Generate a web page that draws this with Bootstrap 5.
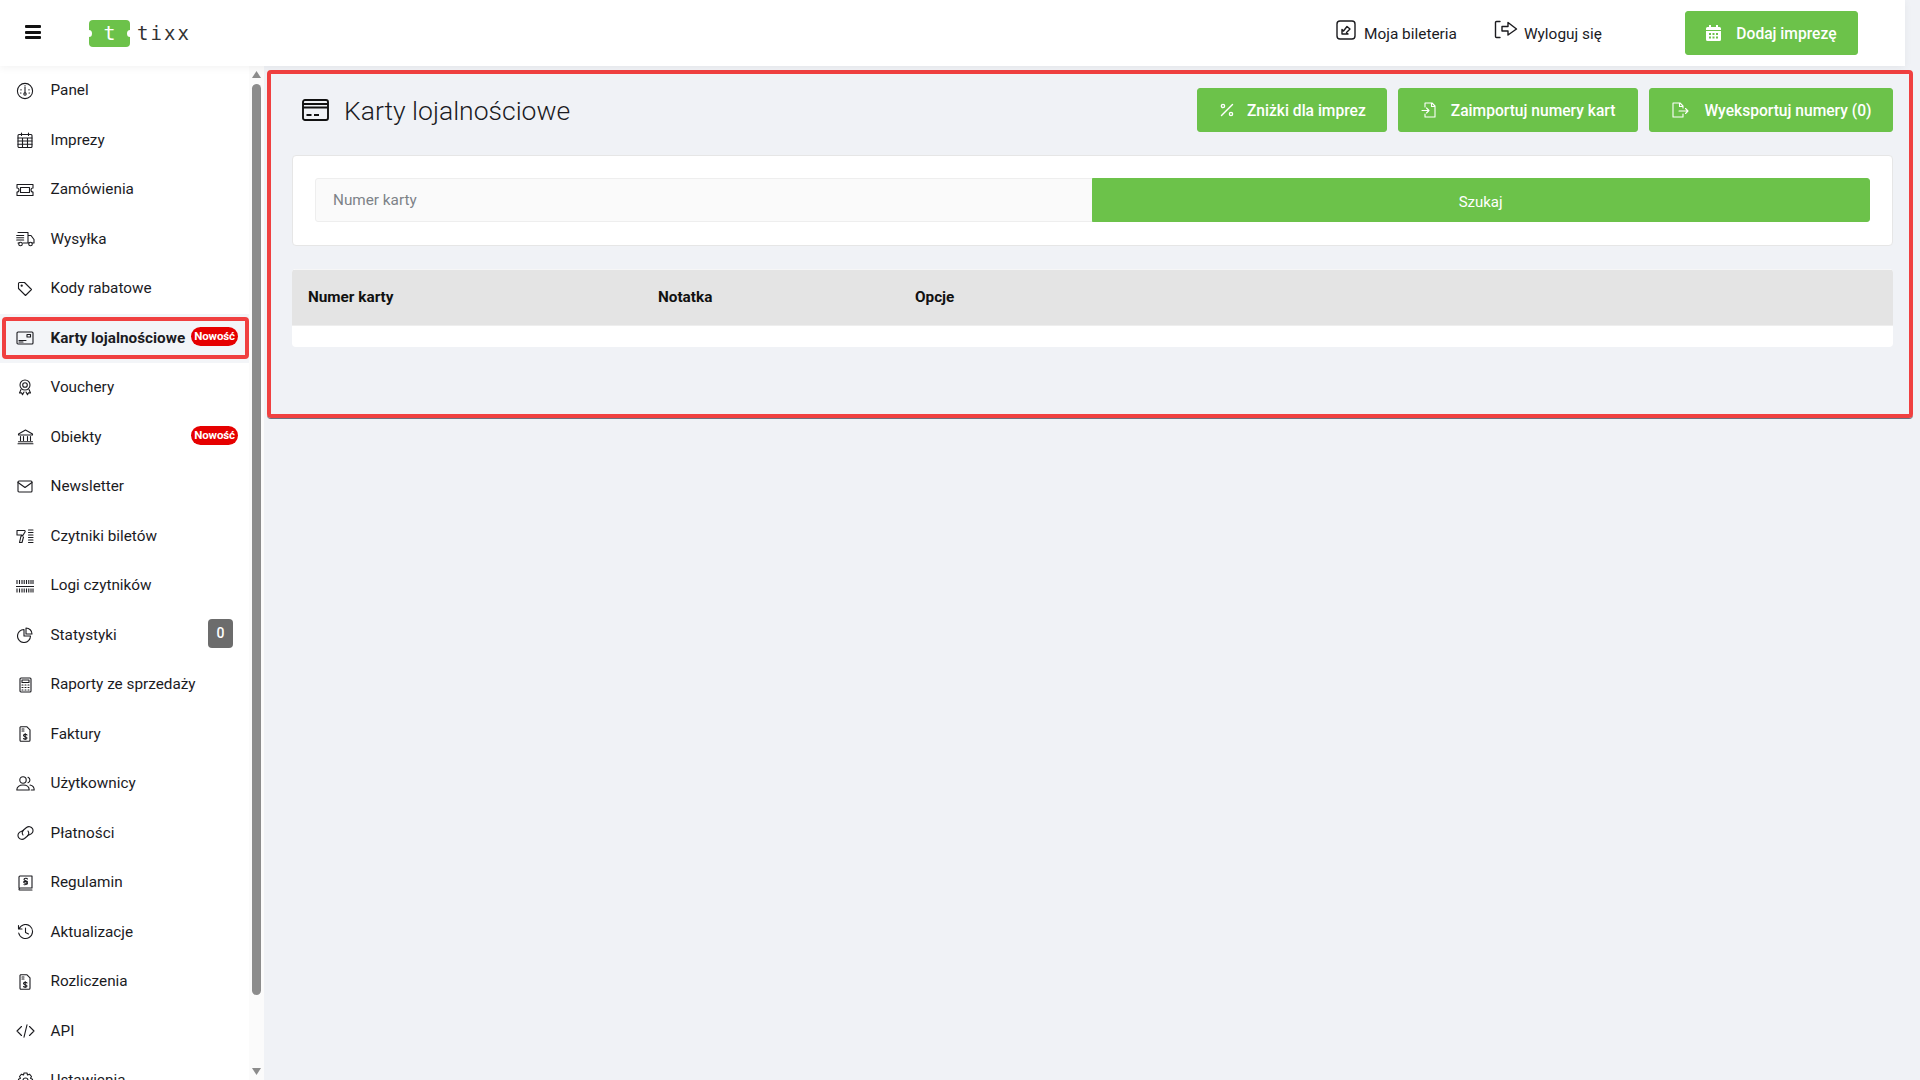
<!DOCTYPE html>
<html lang="pl">
<head>
<meta charset="utf-8">
<title>Karty lojalnościowe</title>
<link href="https://cdn.jsdelivr.net/npm/bootstrap@5.3.0/dist/css/bootstrap.min.css" rel="stylesheet">
<style>
html,body{height:100%;overflow:hidden}
body{font-family:Roboto,"Liberation Sans",sans-serif;background:#f0f2f6;color:#1b1b1f;font-size:14px}
svg{flex:none;display:block}
.ic{fill:none;stroke:currentColor;stroke-width:1.1;stroke-linecap:round;stroke-linejoin:round}
.ic-strong{stroke-width:1.4}
.top-bar{height:66px;margin-right:15px;background:#fff;padding:0;box-shadow:0 2px 8px rgba(0,0,0,.05);position:relative;z-index:2;flex:none}
.burger{margin-left:25px;margin-bottom:2px;width:16px;display:flex;flex-direction:column;gap:2.500px}
.burger span{display:block;height:3px;background:#111;border-radius:1px}
.logo-box{margin-left:48px;width:41px;height:27px;background:#6cc24a;border-radius:4px;color:#fff;font:400 20px/27px "DejaVu Sans Mono","Liberation Mono",monospace;text-align:center;position:relative}
.logo-box::before,.logo-box::after{content:"";position:absolute;top:10px;width:6px;height:7px;background:#fff;border-radius:50%}
.logo-box::before{left:-3px}.logo-box::after{right:-3px}
.logo-txt{margin-left:7px;font:400 19px/27px "DejaVu Sans Mono","Liberation Mono",monospace;color:#333;letter-spacing:2.100px}
.top-link{color:#1b1b1f;font-size:15.4px;text-decoration:none;display:flex;align-items:center;gap:8px;padding-top:4px}
.top-link svg{margin-top:-10px}
.link-one{margin-left:auto}
.link-two{margin-left:37px}
.link-two svg{margin-right:-2px}
.btn-tx{--bs-btn-bg:#6cc24a;--bs-btn-border-color:#6cc24a;--bs-btn-color:#fff;--bs-btn-hover-bg:#5fb33f;--bs-btn-hover-border-color:#5fb33f;--bs-btn-hover-color:#fff;height:44px;font-size:15.6px;font-weight:500;border-radius:3px;padding:4px 22px 0;display:inline-flex;align-items:center;justify-content:center;gap:15px;white-space:nowrap}
.btn-tx svg{margin-top:-4px}
.btn-tight{gap:13px}
.btn-end{padding-right:20px}
.add-btn{margin-left:83px;margin-right:47px;padding-left:20.500px;padding-right:20.500px}
.side{width:264px;flex:none;background:#fff;overflow:hidden}
.side-list{width:249px;flex:none}
.side-item{height:49.5px;display:flex;align-items:center;padding:0 10px 0 16px;color:#1b1b1f;text-decoration:none;font-size:15.3px;position:relative;white-space:nowrap}
.side-item .ico{width:18px;display:flex;justify-content:center;margin-right:16.500px;flex:none}
.side-item.on{background:#f3f5f8;font-weight:700}
.side-item.on::after{content:"";position:absolute;left:2px;right:0;top:3px;bottom:4px;border:4px solid #f04040;border-radius:4px}
.new-tag{background:#e60000;color:#fff;font-size:11.5px;font-weight:700;line-height:19px;padding:0 3px;border-radius:10px;margin-left:auto;margin-right:1px;position:relative;top:-2px;letter-spacing:-.1px}
.zero-tag{background:#6c6c6c;color:#fff;font-size:14px;font-weight:500;width:25px;height:29px;border-radius:4px;display:flex;align-items:center;justify-content:center;margin-left:auto;margin-right:6px;position:relative;top:-2px}
.sbar{width:15px;flex:none;background:#fbfbfb;padding:0 3px;display:flex;flex-direction:column;align-items:center}
.sbar-up{margin-top:5px;margin-bottom:6px}
.sbar-thumb{width:9px;height:911px;background:#8c8c8c;border-radius:5px;flex:none}
.sbar-down{margin-top:auto;margin-bottom:5px}
.main-area{flex:1;min-width:0;padding:4px 7px 0 3px}
.hl-box{border:4px solid #f04040;border-radius:4px;padding:14px 16.500px 67px 21px;box-shadow:0 1px 0 #6b7280}
.page-title{font-size:26.500px;font-weight:300;margin:0;color:#1b1b1f;height:44px;line-height:46px}
.title-ico{margin:0 15px 0 10px;fill:none;stroke:#111;stroke-width:1.900}
.btn-row{gap:11px;margin-left:auto}
.search-card{margin-top:23px;border:1px solid #e6e6e6;border-radius:4px;padding:22px 22px 23px}
.search-card .form-control{height:44px;background:#fafafa;border-color:#eee;font-size:15.3px;padding-left:17px;border-radius:3px 0 0 3px;color:#6c757d;flex:1 1 50%}
.search-card .form-control::placeholder{color:#7d8288}
.search-card .btn-tx{flex:1 1 50%;border-radius:3px;font-weight:400;font-size:15px;padding-top:4px}
.tbl-wrap{margin-top:23px;background:#fff;border-radius:4px;padding-bottom:21px;overflow:hidden}
.tbl-wrap .table{margin:0;table-layout:fixed}
.tbl-wrap th{background:#e4e4e4;height:56px;padding:0 16px;vertical-align:middle;font-size:15.3px;font-weight:700;color:#111;border-bottom:1px solid #eee;border-top:1px solid #f6f6f6}
.col-a{width:350px}.col-b{width:257px}
</style>
</head>
<body class="d-flex flex-column">
<nav class="navbar top-bar flex-nowrap justify-content-start">
  <div class="burger"><span></span><span></span><span></span></div>
  <div class="logo-box">t</div><div class="logo-txt">tixx</div>
  <a href="#" class="top-link link-one">
    <svg width="20" height="20" viewBox="0 0 20 20" class="ic ic-strong"><rect x="1" y="1" width="18" height="18" rx="3"/><path d="M6 14V9.500l1.500 1.500 3.500-4.500 3 2.500-3.500 3.500 1.500 1.500z"/></svg>
    Moja bileteria</a>
  <a href="#" class="top-link link-two">
    <svg width="24" height="20" viewBox="0 0 24 20" class="ic ic-strong"><path d="M6 1.500H2.500a1 1 0 0 0-1 1v14a1 1 0 0 0 1 1H6"/><path d="M8 6.500h6V2.500L22.500 9 14 15v-4H8z"/></svg>
    Wyloguj się</a>
  <a href="#" class="btn btn-tx add-btn">
    <svg width="15" height="16" viewBox="0 0 15 16" fill="#fff"><path d="M3 0h2v2h5V0h2v2h1.500A1.500 1.500 0 0 1 15 3.500V5H0V3.500A1.500 1.500 0 0 1 1.500 2H3z"/><path d="M0 6h15v8.500a1.500 1.500 0 0 1-1.500 1.500h-12A1.500 1.500 0 0 1 0 14.500zM3 8v2h2V8zm3.500 0v2h2V8zM10 8v2h2V8zm-7 3.500v2h2v-2zm3.500 0v2h2v-2zm3.500 0v2h2v-2z" fill-rule="evenodd"/></svg>
    Dodaj imprezę</a>
</nav>
<div class="d-flex flex-grow-1" style="min-height:0">
  <aside class="side d-flex">
    <div class="side-list">
      <a class="side-item" href="#"><span class="ico"><svg width="18" height="18" viewBox="0 0 18 18" class="ic"><circle cx="9" cy="9" r="7.600"/><path d="M9 5v6M5 7.500v.5M13 7.500v.5M4.500 11h.5M13 11h.5M9 3.500v.3"/><circle cx="9" cy="12" r="1.200"/></svg></span>Panel</a>
      <a class="side-item" href="#"><span class="ico"><svg width="16" height="16" viewBox="0 0 16 16" class="ic"><rect x="1" y="2.500" width="14" height="13" rx="1"/><path d="M1 6h14M1 9h14M1 12.300h14M5.500 6v9.500M10.500 6v9.500M4.500 1v2.500M11.500 1v2.500"/></svg></span>Imprezy</a>
      <a class="side-item" href="#"><span class="ico"><svg width="18" height="14" viewBox="0 0 18 14" class="ic"><path d="M1 1.500h16v3.500a2 2 0 0 0 0 4v3.500H1V9a2 2 0 0 0 0-4z"/><rect x="4.500" y="4.500" width="9" height="5"/></svg></span>Zamówienia</a>
      <a class="side-item" href="#"><span class="ico"><svg width="19" height="16" viewBox="0 0 19 16" class="ic"><path d="M2 1.500h10v10.500M12 4.500h3l3 4v3.500h-2M7 12h6M2 12h1"/><circle cx="4.500" cy="13" r="1.800"/><circle cx="14.500" cy="13" r="1.800"/><path d="M.7 4.500h7M.7 6.800h7M.7 9h7"/></svg></span>Wysyłka</a>
      <a class="side-item" href="#"><span class="ico"><svg width="16" height="16" viewBox="0 0 16 16" class="ic"><path d="M1.500 2.500a1 1 0 0 1 1-1h5l7 7-6 6-7-7z"/><circle cx="4.700" cy="4.700" r=".6"/></svg></span>Kody rabatowe</a>
      <a class="side-item on" href="#"><span class="ico"><svg width="18" height="14" viewBox="0 0 18 14" class="ic"><rect x="1" y="1" width="16" height="12" rx="1"/><path d="M3 9.500h7M3 11h4"/><rect x="11" y="3.500" width="3.500" height="2.500"/></svg></span>Karty lojalnościowe<span class="new-tag">Nowość</span></a>
      <a class="side-item" href="#"><span class="ico"><svg width="14" height="17" viewBox="0 0 14 17" class="ic"><circle cx="7" cy="6" r="5"/><circle cx="7" cy="6" r="2.300"/><path d="M3 10.500 1.500 14l2-.2 1 2L6 13M11 10.500l1.500 3.500-2-.2-1 2L8 13"/></svg></span>Vouchery</a>
      <a class="side-item" href="#"><span class="ico"><svg width="17" height="16" viewBox="0 0 17 16" class="ic"><path d="M8.500 1 15.500 5v1h-14V5zM1 14.800h15M1.500 12.800h14M3.500 7.500v4M6.500 7.500v4M10.500 7.500v4M13.500 7.500v4"/></svg></span>Obiekty<span class="new-tag">Nowość</span></a>
      <a class="side-item" href="#"><span class="ico"><svg width="16" height="13" viewBox="0 0 16 13" class="ic"><rect x="1" y="1" width="14" height="11" rx="1"/><path d="m1 2.500 7 5 7-5"/></svg></span>Newsletter</a>
      <a class="side-item" href="#"><span class="ico"><svg width="18" height="15" viewBox="0 0 18 15" class="ic"><path d="M1 1.500h7.500a1 1 0 0 1 .5 1.500L6.500 7H5L3.500 13.500H6L7.500 8M1 1.500v4.500h5"/><path d="M12.500 1h4.500M12.500 3.500h4.500M12.500 6h4.500M12.500 8.500h4.500M12.500 11h4.500M12.500 13.500h4.500"/></svg></span>Czytniki biletów</a>
      <a class="side-item" href="#"><span class="ico"><svg width="18" height="14" viewBox="0 0 18 14" class="ic"><path d="M0 7.500h18"/><path stroke-width="1.100" d="M1 1v4M3.500 1v4M6 1v4M8.200 1v4M10.500 1v4M12.800 1v4M15 1v4M17 1v4M1 9.500v4M3.500 9.500v4M6 9.500v4M8.200 9.500v4M10.500 9.500v4M12.800 9.500v4M15 9.500v4M17 9.500v4" stroke-linecap="butt"/></svg></span>Logi czytników</a>
      <a class="side-item" href="#"><span class="ico"><svg width="16" height="16" viewBox="0 0 16 16" class="ic"><path d="M7 2.500a6.500 6.500 0 1 0 6.500 6.500H7z"/><path d="M9 1v6h6a6 6 0 0 0-6-6z"/></svg></span>Statystyki<span class="zero-tag">0</span></a>
      <a class="side-item" href="#"><span class="ico"><svg width="13" height="16" viewBox="0 0 13 16" class="ic"><rect x="1" y="1" width="11" height="14" rx="1"/><rect x="3" y="3" width="7" height="2.500"/><path d="M3 8h1M6 8h1M9 8h1M3 10.500h1M6 10.500h1M9 10.500h1M3 13h1M6 13h1M9 13h1"/></svg></span>Raporty ze sprzedaży</a>
      <a class="side-item" href="#"><span class="ico"><svg width="12" height="16" viewBox="0 0 12 16" class="ic"><path d="M1.500.8H8l3 3v10.500a1 1 0 0 1-1 1H2a1 1 0 0 1-1-1V1.300z"/><path d="M3 3h2M3 5h2M8 9c-.5-1-3.500-1-3.500.5S8 10.500 8 12s-3 1.500-3.500.5M6.200 7.500v6"/></svg></span>Faktury</a>
      <a class="side-item" href="#"><span class="ico"><svg width="19" height="15" viewBox="0 0 19 15" class="ic"><circle cx="7" cy="4" r="3.200"/><path d="M.8 14c0-3 2.500-5 6.200-5s6.200 2 6.200 5z"/><path d="M12 1.200a3 3 0 0 1 0 5.600M14 9c2.500.5 4.200 2.300 4.200 5h-3"/></svg></span>Użytkownicy</a>
      <a class="side-item" href="#"><span class="ico"><svg width="19" height="14" viewBox="0 0 19 14" class="ic"><path d="M7.500 4.500 5 5.500a4 4 0 1 0 3.500 7l3-2.500a4 4 0 0 0 .5-5"/><path d="M11.500 9.500 14 8.500a4 4 0 1 0-3.500-7l-3 2.500a4 4 0 0 0-.5 5"/></svg></span>Płatności</a>
      <a class="side-item" href="#"><span class="ico"><svg width="15" height="16" viewBox="0 0 15 16" class="ic"><path d="M1 13V2a1 1 0 0 1 1-1h12v12H2.500A1.500 1.500 0 0 0 1 14.500 .5 .5 0 0 0 1.500 15H14"/><path d="M9.500 4c-.5-1-3.500-1-3.500.5s3.500 1 3.500 2.500-3 1.500-3.500.5M5.500 7c0-1 4-1 4 1.500 0 1-3.500 1.500-3.500 1"/></svg></span>Regulamin</a>
      <a class="side-item" href="#"><span class="ico"><svg width="17" height="16" viewBox="0 0 17 16" class="ic"><path d="M1.500 1.500v3.500H5M2 5a7 7 0 1 1-.3 4"/><path d="M8.500 4v4.500l3 1.500"/></svg></span>Aktualizacje</a>
      <a class="side-item" href="#"><span class="ico"><svg width="12" height="16" viewBox="0 0 12 16" class="ic"><path d="M1.500.8H8l3 3v10.500a1 1 0 0 1-1 1H2a1 1 0 0 1-1-1V1.300z"/><path d="M3 3h2M3 5h2M8 9c-.5-1-3.500-1-3.500.5S8 10.500 8 12s-3 1.500-3.500.5M6.200 7.500v6"/></svg></span>Rozliczenia</a>
      <a class="side-item" href="#"><span class="ico"><svg width="19" height="14" viewBox="0 0 19 14" class="ic"><path d="M5.500 2.500 1 7l4.500 4.500M13.500 2.500 18 7l-4.500 4.500M11 .8 8 13.200"/></svg></span>API</a>
      <a class="side-item" href="#"><span class="ico"><svg width="17" height="17" viewBox="0 0 17 17" class="ic"><path d="M7 1h3l.5 2 2-.8 2 2.300-1 1.800 2 1v2.700l-2 .8 1 2-2 2.200-2-1-.5 2H7l-.5-2-2 1-2-2.200 1-2-2-.8V7.300l2-1-1-1.800 2-2.300 2 .8z"/><circle cx="8.500" cy="8.500" r="2.500"/></svg></span>Ustawienia</a>
    </div>
    <div class="sbar">
      <svg class="sbar-up" width="9" height="7" viewBox="0 0 9 7"><path d="M4.500 0 9 7H0z" fill="#8c8c8c"/></svg>
      <div class="sbar-thumb"></div>
      <svg class="sbar-down" width="9" height="7" viewBox="0 0 9 7"><path d="M4.500 7 9 0H0z" fill="#8c8c8c"/></svg>
    </div>
  </aside>
  <main class="main-area">
    <section class="hl-box">
      <div class="d-flex align-items-center">
        <svg class="title-ico" width="27" height="22" viewBox="0 0 27 22"><rect x="1" y="1" width="25" height="20" rx="2"/><path d="M1 5h25M1 8.500h25M4.500 16h5M12 16h5"/></svg>
        <h1 class="page-title">Karty lojalnościowe</h1>
        <div class="d-flex btn-row">
          <a href="#" class="btn btn-tx btn-tight btn-end"><svg width="14" height="14" viewBox="0 0 14 14" class="ic ic-strong"><path d="M12.500 1.500 1.500 12.500"/><circle cx="3" cy="3" r="1.600"/><circle cx="11" cy="11" r="1.600"/></svg>Zniżki dla imprez</a>
          <a href="#" class="btn btn-tx"><svg width="15" height="16" viewBox="0 0 15 16" class="ic"><path d="M4 5V1h7l3 3v11H4v-3M10.500 1v3.500H14"/><path d="M1 8.500h7M5.500 6 8 8.500 5.500 11"/></svg>Zaimportuj numery kart</a>
          <a href="#" class="btn btn-tx btn-end"><svg width="17" height="16" viewBox="0 0 17 16" class="ic"><path d="M11 6V4L8 1H1v14h10v-3M7.500 1v3.500H11"/><path d="M7 9h9M13.500 6.500 16 9l-2.500 2.500"/></svg>Wyeksportuj numery (0)</a>
        </div>
      </div>
      <div class="card search-card">
        <div class="input-group">
          <input type="text" class="form-control" placeholder="Numer karty">
          <button type="button" class="btn btn-tx">Szukaj</button>
        </div>
      </div>
      <div class="tbl-wrap">
        <table class="table">
          <thead><tr><th class="col-a">Numer karty</th><th class="col-b">Notatka</th><th>Opcje</th></tr></thead>
        </table>
      </div>
    </section>
  </main>
</div>
<script src="https://cdn.jsdelivr.net/npm/bootstrap@5.3.0/dist/js/bootstrap.bundle.min.js"></script>
</body>
</html>
